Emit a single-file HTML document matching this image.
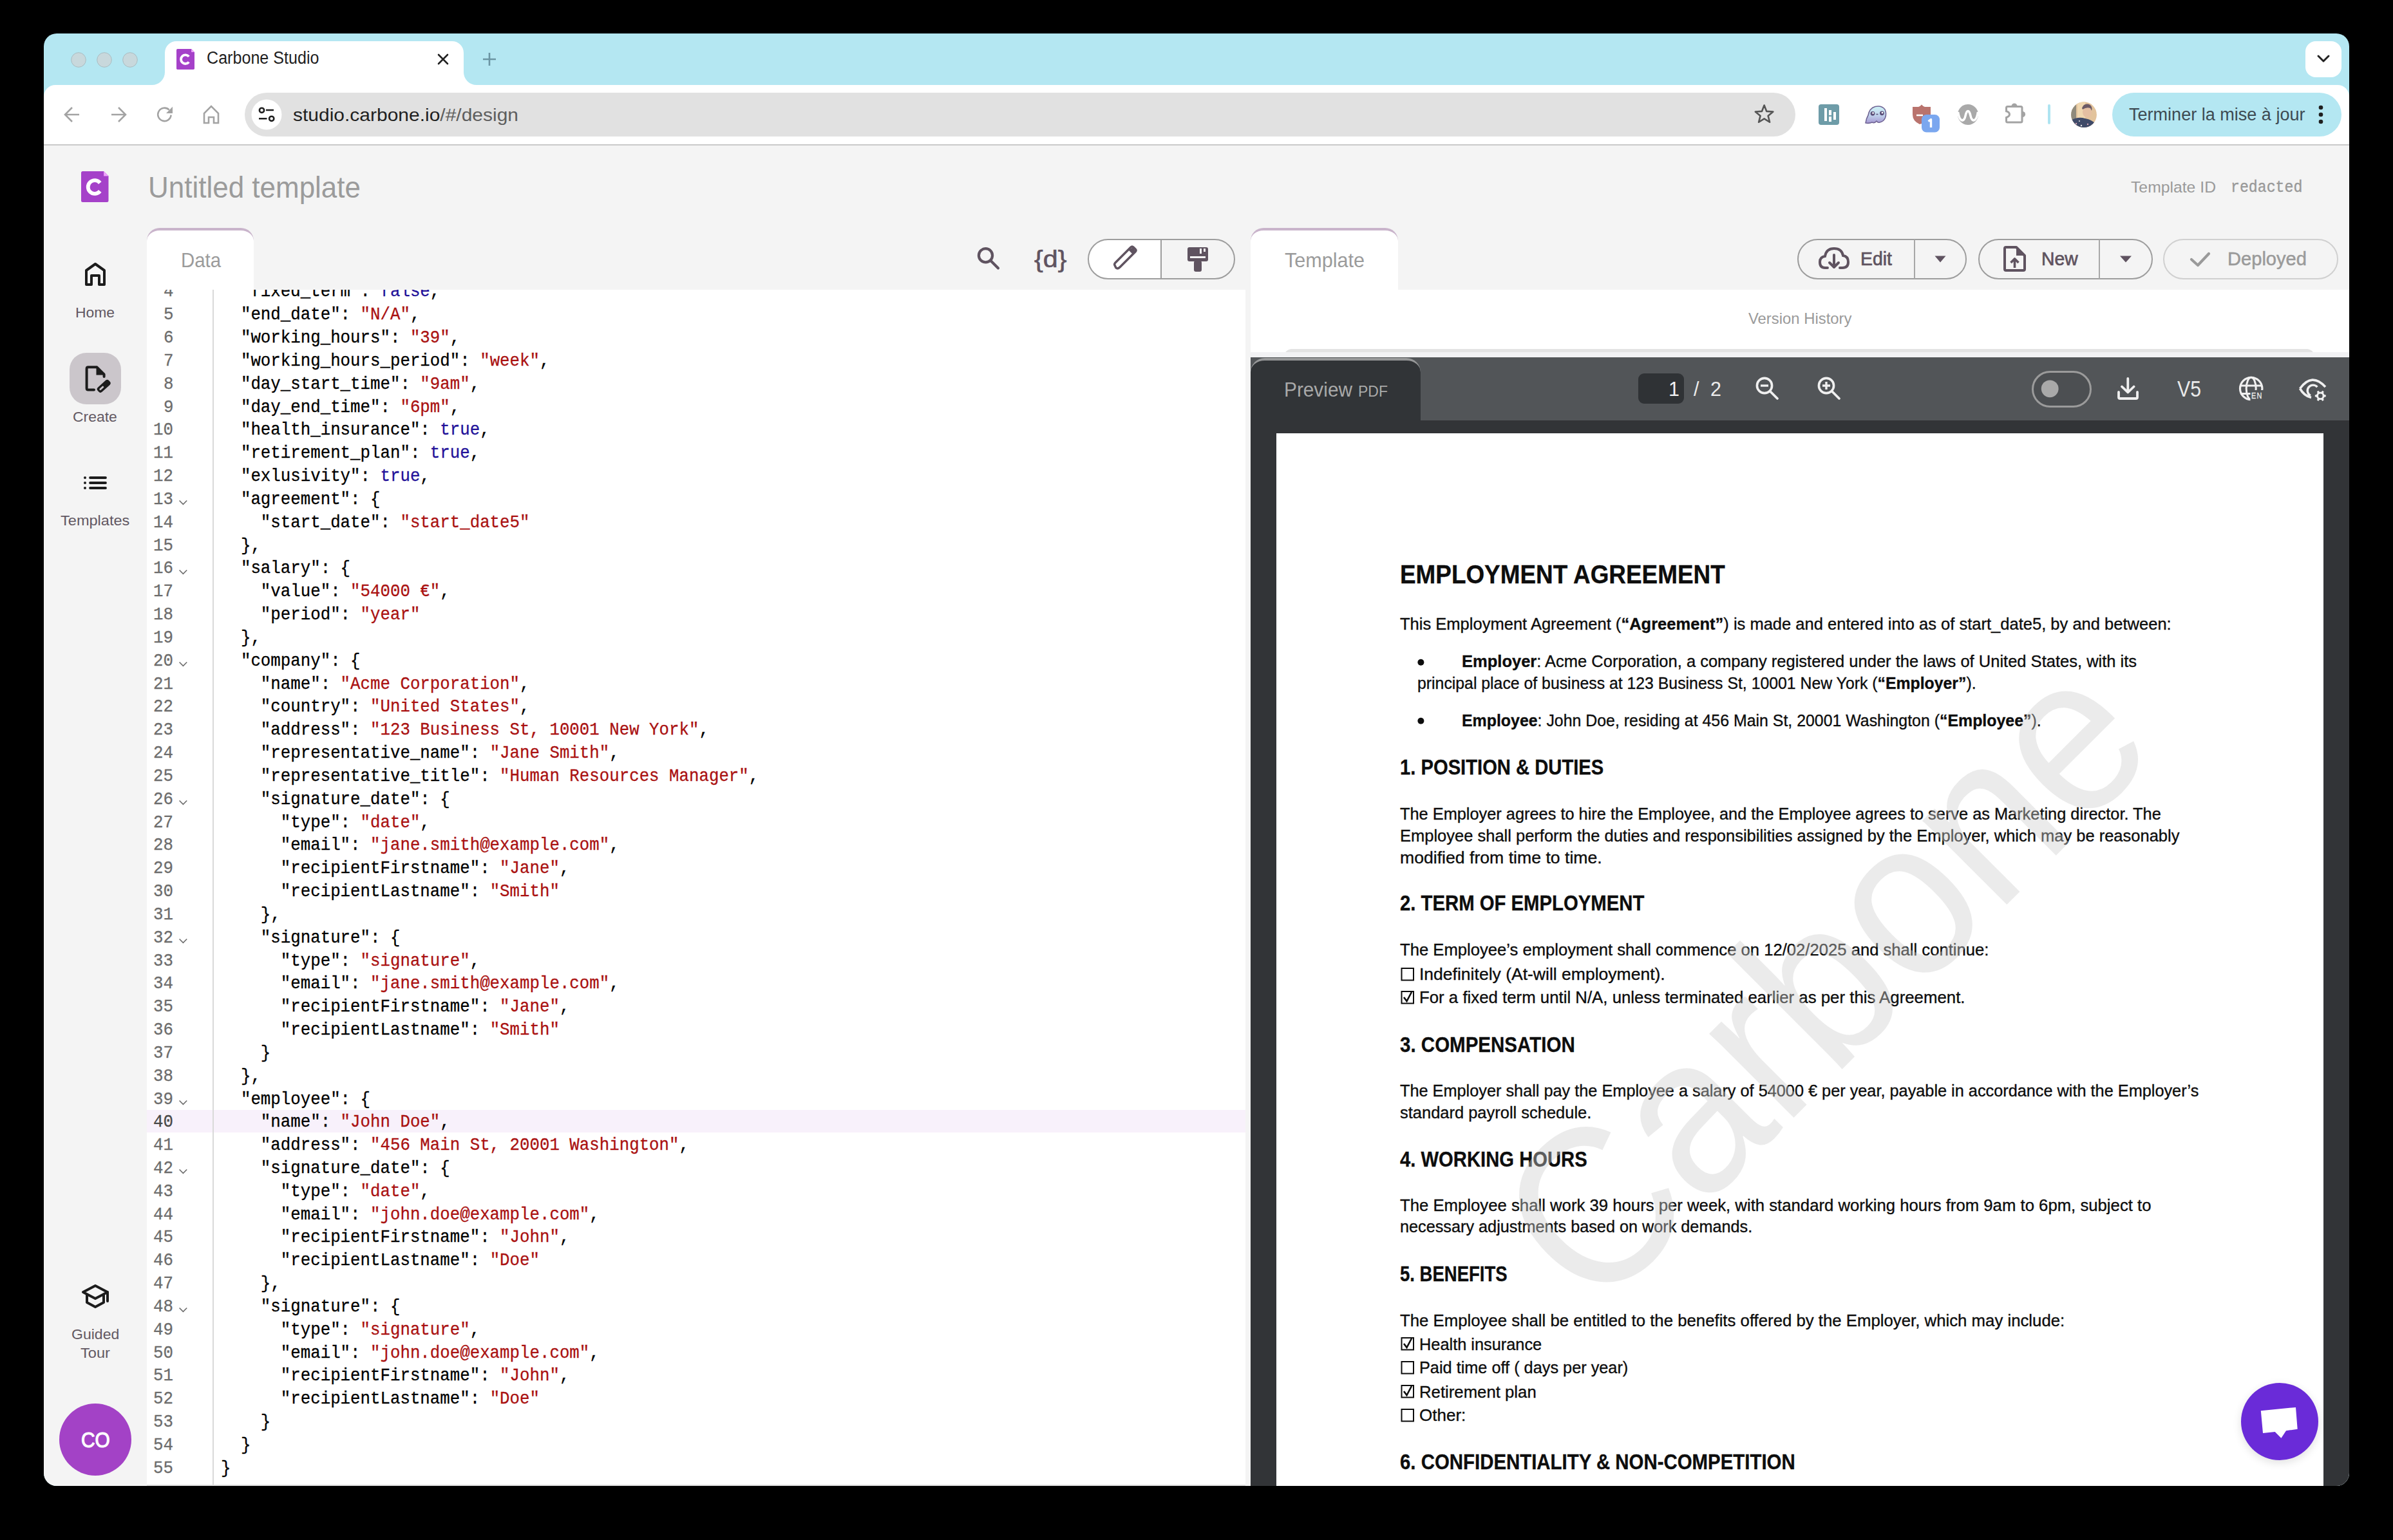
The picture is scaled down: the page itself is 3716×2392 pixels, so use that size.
<!DOCTYPE html>
<html><head><meta charset="utf-8"><title>Carbone Studio</title>
<style>
html,body{margin:0;padding:0;width:3716px;height:2392px;overflow:hidden;background:#000;}
#win{position:absolute;left:68px;top:52px;width:3580px;height:2256px;border-radius:20px;overflow:hidden;background:#b4e7f2;}
.t{position:absolute;white-space:pre;}
b{font-weight:700;}
</style></head><body>
<div id="win">
<svg style="position:absolute;left:41.00px;top:28.00px;" width="26" height="26" viewBox="109 80 26 26"><circle cx="122" cy="93" r="11.3" fill="#c8d8dc" stroke="#a9bcc1" stroke-width="1"/></svg>
<svg style="position:absolute;left:81.00px;top:28.00px;" width="26" height="26" viewBox="149 80 26 26"><circle cx="162" cy="93" r="11.3" fill="#c8d8dc" stroke="#a9bcc1" stroke-width="1"/></svg>
<svg style="position:absolute;left:121.00px;top:28.00px;" width="26" height="26" viewBox="189 80 26 26"><circle cx="202" cy="93" r="11.3" fill="#c8d8dc" stroke="#a9bcc1" stroke-width="1"/></svg>
<svg style="position:absolute;left:158.00px;top:8.00px;" width="524" height="74" viewBox="226 60 524 74"><path d="M226 132 L236 132 A20 20 0 0 0 256 112 L256 82 A18 18 0 0 1 274 64 L702 64 A18 18 0 0 1 720 82 L720 112 A20 20 0 0 0 740 132 L750 132 L750 134 L226 134 Z" fill="#fff"/></svg>
<svg style="position:absolute;left:206.00px;top:24.00px;" width="28" height="32" viewBox="274 76 28 32"><path d="M275.6470588235294 76 L297.12470588235294 76 L302 80.87529411764706 L302 106.3529411764706 Q302 108 300.3529411764706 108 L275.6470588235294 108 Q274 108 274 106.3529411764706 L274 77.6470588235294 Q274 76 275.6470588235294 76 Z" fill="#a541c9"/><path d="M297.12470588235294 76 L302 80.87529411764706 L297.12470588235294 80.87529411764706 Z" fill="#eea2fb"/><path d="M293.30 87.92 A6.85 6.85 0 1 0 293.30 96.36" stroke="#fff" stroke-width="3.82" fill="none"/></svg>
<span id="t1" class="t" style="left:253.00px;top:25.35px;font-size:27px;line-height:27px;font-family:'Liberation Sans',sans-serif;color:#1f1f1f;font-weight:400;transform:scaleX(0.9300);transform-origin:left top;">Carbone Studio</span>
<svg style="position:absolute;left:610.00px;top:30.00px;" width="20" height="20" viewBox="678 82 20 20"><path d="M681 85 L695 99 M695 85 L681 99" stroke="#222" stroke-width="2.6" stroke-linecap="round"/></svg>
<svg style="position:absolute;left:680.00px;top:28.00px;" width="24" height="24" viewBox="748 80 24 24"><path d="M760 82 L760 102 M750 92 L770 92" stroke="#6b95a3" stroke-width="2.6"/></svg>
<div  style="position:absolute;left:3512.00px;top:12.00px;width:56.00px;height:56.00px;background:#fff;border-radius:16px;"></div>
<svg style="position:absolute;left:3528.00px;top:32.00px;" width="24" height="16" viewBox="3596 84 24 16"><path d="M3600 87 L3608 95 L3616 87" stroke="#222" stroke-width="3" fill="none" stroke-linecap="round" stroke-linejoin="round"/></svg>
<svg style="position:absolute;left:0.00px;top:80.00px;" width="3580" height="94" viewBox="68 132 3580 94"><path d="M68 226 L68 150 A18 18 0 0 1 86 132 L3630 132 A18 18 0 0 1 3648 150 L3648 226 Z" fill="#fff"/></svg>
<div  style="position:absolute;left:0.00px;top:172.00px;width:3580.00px;height:2.00px;background:#c9c9c9;"></div>
<svg style="position:absolute;left:28.00px;top:110.00px;" width="32" height="32" viewBox="96 162 32 32"><path d="M123 178 L101 178 M112 167 L101 178 L112 189" stroke="#a3a3a3" stroke-width="2.6" fill="none"/></svg>
<svg style="position:absolute;left:100.00px;top:110.00px;" width="32" height="32" viewBox="168 162 32 32"><path d="M173 178 L195 178 M184 167 L195 178 L184 189" stroke="#a3a3a3" stroke-width="2.6" fill="none"/></svg>
<svg style="position:absolute;left:172.00px;top:110.00px;" width="32" height="32" viewBox="240 162 32 32"><path d="M265.6 178.7 A10.2 10.2 0 1 1 262.6 170.6" stroke="#a3a3a3" stroke-width="2.6" fill="none"/><path d="M268 165.8 L268 176 L258 176 Z" fill="#a3a3a3"/></svg>
<svg style="position:absolute;left:244.00px;top:108.00px;" width="32" height="36" viewBox="312 160 32 36"><path d="M317 191 L317 176 L328 165 L339 176 L339 191 L332 191 L332 182 L324 182 L324 191 Z" stroke="#a3a3a3" stroke-width="2.6" fill="none" stroke-linejoin="miter"/></svg>
<div  style="position:absolute;left:312.00px;top:92.00px;width:2408.00px;height:68.00px;background:#e1e1e1;border-radius:34px;"></div>
<svg style="position:absolute;left:322.00px;top:102.00px;" width="48" height="48" viewBox="390 154 48 48"><circle cx="414" cy="178" r="23.5" fill="#fff"/><circle cx="406.5" cy="171.3" r="3.6" stroke="#1f1f1f" stroke-width="2.6" fill="none"/><path d="M413 171 L425 171 M402 184.3 L414.5 184.3" stroke="#1f1f1f" stroke-width="2.6"/><circle cx="421.7" cy="184.3" r="3.6" stroke="#1f1f1f" stroke-width="2.6" fill="none"/></svg>
<span id="t2" class="t" style="left:387.00px;top:111.78px;font-size:28.5px;line-height:28.5px;font-family:'Liberation Sans',sans-serif;color:#000;font-weight:400;transform:scaleX(1.0519);transform-origin:left top;"><span style="color:#1f1f1f">studio.carbone.io</span><span style="color:#5e5e5e">/#/design</span></span>
<svg style="position:absolute;left:2652.00px;top:106.00px;" width="40" height="40" viewBox="2720 158 40 40"><path d="M2739.60 163.50 L2743.30 172.90 L2753.39 173.52 L2745.59 179.95 L2748.12 189.73 L2739.60 184.30 L2731.08 189.73 L2733.61 179.95 L2725.81 173.52 L2735.90 172.90 Z" stroke="#555" stroke-width="2.6" fill="none" stroke-linejoin="round"/></svg>
<svg style="position:absolute;left:2756.00px;top:110.00px;" width="32" height="32" viewBox="2824 162 32 32"><rect x="2824" y="162" width="32" height="32" rx="4" fill="#6e9ca8"/><rect x="2833" y="168" width="4" height="20" fill="#fff"/><rect x="2840" y="171" width="4" height="8" fill="#fff"/><rect x="2840" y="181" width="4" height="8" fill="#fff"/><rect x="2847" y="174" width="4" height="12" fill="#fff"/></svg>
<svg style="position:absolute;left:2824.00px;top:108.00px;" width="40" height="36" viewBox="2892 160 40 36"><defs><linearGradient id="gh" x1="0" y1="0" x2="0" y2="1"><stop offset="0" stop-color="#cdf3f6"/><stop offset="0.5" stop-color="#c2d6ee"/><stop offset="1" stop-color="#a597d2"/></linearGradient></defs><path d="M2897 191 Q2898 184 2901 179 Q2903 168 2912 165.5 Q2922 163.5 2927 170 Q2930 176 2927.5 183 Q2925 189 2919 190 Q2916 191 2914 188 Q2911 192 2907 190 Q2903 192 2897 191 Z" fill="url(#gh)" stroke="#6f6494" stroke-width="1.6" stroke-linejoin="round"/><circle cx="2908" cy="176.3" r="3.4" fill="#5a4e78"/><circle cx="2908.6" cy="175.6" r="1.4" fill="#fff"/><circle cx="2922.4" cy="175.8" r="3.4" fill="#5a4e78"/><circle cx="2923" cy="175.1" r="1.4" fill="#fff"/><path d="M2913.5 177.5 L2916.5 177.5" stroke="#5a4e78" stroke-width="1.6"/></svg>
<svg style="position:absolute;left:2898.00px;top:106.00px;" width="50" height="50" viewBox="2966 158 50 50"><path d="M2970 166 L2979 166 Q2982 165 2984 162.5 Q2986 165 2989 166 L2998 166 L2998 178 Q2997 188 2981 193 Q2970 188 2970 178 Z" fill="#b9736d"/><path d="M2976 179 L2986 179" stroke="#fff" stroke-width="2.6"/><rect x="2984" y="178" width="28" height="27.5" rx="7.5" fill="#7ba7ef"/><path d="M2994.5 188.5 L2998.5 185.5 L2998.5 198" stroke="#fff" stroke-width="3.4" fill="none" stroke-linejoin="round"/></svg>
<svg style="position:absolute;left:2970.00px;top:108.00px;" width="36" height="36" viewBox="3038 160 36 36"><circle cx="3056" cy="178" r="16" fill="#a9a9a9"/><path d="M3040.5 174 C3043 190 3050 190 3052 180 C3054 170 3058 170 3060 180 C3062 190 3069 190 3071.5 174" stroke="#fff" stroke-width="3.6" fill="none"/></svg>
<svg style="position:absolute;left:3040.00px;top:102.00px;" width="44" height="44" viewBox="3108 154 44 44"><path d="M3117.5 165.5 L3138 165.5 Q3140 165.5 3140 167.5 L3140 188 Q3140 190 3138 190 L3117.5 190 Q3115.5 190 3115.5 188 L3115.5 182.5 Q3120.5 181 3120.5 177.6 Q3120.5 174.2 3115.5 172.8 L3115.5 167.5 Q3115.5 165.5 3117.5 165.5 Z" stroke="#a3a3a3" stroke-width="3" fill="none"/><path d="M3123.5 165 A4.5 4.5 0 0 1 3132.5 165 Z" fill="#a3a3a3"/><path d="M3140.5 173 A4.6 4.6 0 0 1 3140.5 182.2 Z" fill="#a3a3a3"/></svg>
<div  style="position:absolute;left:3112.00px;top:110.00px;width:4.00px;height:31.00px;background:#aee4f1;border-radius:2px;"></div>
<svg style="position:absolute;left:3146.00px;top:104.00px;" width="44" height="44" viewBox="3214 156 44 44"><defs><clipPath id="av"><circle cx="3236" cy="178.2" r="19.9"/></clipPath></defs><g clip-path="url(#av)"><rect x="3214" y="156" width="44" height="44" fill="#e2c39c"/><rect x="3216" y="156" width="8" height="30" fill="#8f8a7c"/><rect x="3226" y="156" width="12" height="28" fill="#efd7b0"/><ellipse cx="3241" cy="174" rx="7" ry="8.5" fill="#e4bfa2"/><path d="M3233 168 Q3236 160 3244 162 Q3250 165 3248 172 L3246 168 Q3240 166 3234 170 Z" fill="#6b5a66"/><path d="M3214 188 Q3226 180 3238 184 Q3250 186 3258 196 L3258 200 L3214 200 Z" fill="#3f4a68"/><circle cx="3224" cy="192" r="1.2" fill="#d9a6b8"/><circle cx="3232" cy="195" r="1.2" fill="#e6e6e6"/><circle cx="3242" cy="193" r="1.2" fill="#d9a6b8"/><circle cx="3229" cy="188" r="1" fill="#e6e6e6"/></g></svg>
<div  style="position:absolute;left:3212.00px;top:92.00px;width:356.00px;height:68.00px;background:#b4e7f2;border-radius:34px;"></div>
<span id="t3" class="t" style="left:3237.50px;top:113.05px;font-size:27px;line-height:27px;font-family:'Liberation Sans',sans-serif;color:#3e4b53;font-weight:400;transform:scaleX(1.0015);transform-origin:left top;">Terminer la mise à jour</span>
<svg style="position:absolute;left:3531.00px;top:109.60px;" width="10" height="10" viewBox="3599 161.6 10 10"><circle cx="3604" cy="166.6" r="3.3" fill="#1f1f1f"/></svg>
<svg style="position:absolute;left:3531.00px;top:121.00px;" width="10" height="10" viewBox="3599 173 10 10"><circle cx="3604" cy="178" r="3.3" fill="#1f1f1f"/></svg>
<svg style="position:absolute;left:3531.00px;top:132.30px;" width="10" height="10" viewBox="3599 184.3 10 10"><circle cx="3604" cy="189.3" r="3.3" fill="#1f1f1f"/></svg>
<div  style="position:absolute;left:0.00px;top:174.00px;width:3580.00px;height:2082.00px;background:#f4f4f4;"></div>
<svg style="position:absolute;left:58.40px;top:213.80px;" width="42.5" height="48" viewBox="126.4 265.8 42.5 48"><path d="M128.9 265.8 L161.5 265.8 L168.9 273.2 L168.9 311.3 Q168.9 313.8 166.4 313.8 L128.9 313.8 Q126.4 313.8 126.4 311.3 L126.4 268.3 Q126.4 265.8 128.9 265.8 Z" fill="#a541c9"/><path d="M161.5 265.8 L168.9 273.2 L161.5 273.2 Z" fill="#eea2fb"/><path d="M155.70 283.90 A10.40 10.40 0 1 0 155.70 296.70" stroke="#fff" stroke-width="5.80" fill="none"/></svg>
<span id="t4" class="t" style="left:162.00px;top:216.52px;font-size:45.5px;line-height:45.5px;font-family:'Liberation Sans',sans-serif;color:#9b9b9b;font-weight:400;transform:scaleX(0.9665);transform-origin:left top;">Untitled template</span>
<span id="t5" class="t" style="left:3241.00px;top:226.64px;font-size:24.3px;line-height:24.3px;font-family:'Liberation Sans',sans-serif;color:#9a9a9a;font-weight:400;transform:scaleX(1.0182);transform-origin:left top;">Template ID</span>
<span id="t6" class="t" style="left:3395.50px;top:227.20px;font-size:25px;line-height:25px;font-family:'Liberation Mono',monospace;color:#999;font-weight:400;transform:scaleX(0.9281);transform-origin:left top;-webkit-text-stroke:0.4px #999;">redacted</span>
<svg style="position:absolute;left:60.00px;top:353.00px;" width="40" height="42" viewBox="128 405 40 42"><path d="M134 442 L134 420 L148 410 L162 420 L162 442 L154 442 L154 428 L142 428 L142 442 Z" stroke="#1c1c1c" stroke-width="4" fill="none" stroke-linejoin="round"/></svg>
<span id="t7" class="t" style="left:49.30px;top:422.70px;font-size:22px;line-height:22px;font-family:'Liberation Sans',sans-serif;color:#625862;font-weight:400;transform:scaleX(1.0411);transform-origin:left top;">Home</span>
<div  style="position:absolute;left:40.00px;top:496.00px;width:80.00px;height:80.00px;background:#cbc6cb;border-radius:26px;"></div>
<svg style="position:absolute;left:60.00px;top:510.00px;" width="48" height="52" viewBox="128 562 48 52"><path d="M146 605.5 L137 605.5 Q134.6 605.5 134.6 603 L134.6 572.7 Q134.6 570.3 137 570.3 L150.5 570.3 L161.6 581.5 L161.6 585" stroke="#1c1c1c" stroke-width="4" fill="none" stroke-linejoin="round" stroke-linecap="round"/><path d="M149.5 568.8 L163.2 582.6 L149.5 582.6 Z" fill="#1c1c1c"/><g transform="rotate(-42 161.2 599.8)"><rect x="149.5" y="595" width="23.4" height="9.6" rx="3.6" fill="#1c1c1c"/><rect x="152.6" y="598.3" width="8" height="3" rx="1.2" fill="#cbc6cb"/></g></svg>
<span id="t8" class="t" style="left:45.40px;top:584.50px;font-size:22px;line-height:22px;font-family:'Liberation Sans',sans-serif;color:#625862;font-weight:400;transform:scaleX(1.0432);transform-origin:left top;">Create</span>
<svg style="position:absolute;left:58.00px;top:683.00px;" width="44" height="30" viewBox="126 735 44 30"><circle cx="132" cy="742" r="2" fill="#1c1c1c"/><circle cx="132" cy="750" r="2" fill="#1c1c1c"/><circle cx="132" cy="758" r="2" fill="#1c1c1c"/><path d="M140 742 L164 742 M140 750 L164 750 M140 758 L164 758" stroke="#1c1c1c" stroke-width="3.8" stroke-linecap="round"/></svg>
<span id="t9" class="t" style="left:26.30px;top:745.70px;font-size:22px;line-height:22px;font-family:'Liberation Sans',sans-serif;color:#625862;font-weight:400;transform:scaleX(1.0710);transform-origin:left top;">Templates</span>
<svg style="position:absolute;left:56.00px;top:1938.00px;" width="50" height="46" viewBox="124 1990 50 46"><path d="M129 2007 L148 1997 L167 2007 L148 2017 Z" stroke="#1c1c1c" stroke-width="4" fill="none" stroke-linejoin="round"/><path d="M135 2011 L135 2023 L148 2030 L161 2023 L161 2011" stroke="#1c1c1c" stroke-width="4" fill="none" stroke-linejoin="round"/><path d="M167 2007 L167 2021" stroke="#1c1c1c" stroke-width="4" stroke-linecap="round"/></svg>
<span id="t10" class="t" style="left:42.70px;top:2010.30px;font-size:22px;line-height:22px;font-family:'Liberation Sans',sans-serif;color:#625862;font-weight:400;transform:scaleX(1.0472);transform-origin:left top;">Guided</span>
<span id="t11" class="t" style="left:56.80px;top:2038.60px;font-size:22px;line-height:22px;font-family:'Liberation Sans',sans-serif;color:#625862;font-weight:400;transform:scaleX(1.0725);transform-origin:left top;">Tour</span>
<div  style="position:absolute;left:24.00px;top:2128.00px;width:112.00px;height:112.00px;background:#a342c6;border-radius:50%;"></div>
<span id="t12" class="t" style="left:58.00px;top:2167.10px;font-size:34px;line-height:34px;font-family:'Liberation Sans',sans-serif;color:#fff;font-weight:400;transform:scaleX(0.8765);transform-origin:left top;-webkit-text-stroke:1.2px #fff;">CO</span>
<div  style="position:absolute;left:160.00px;top:302.00px;width:166.00px;height:96.00px;background:#fff;border-radius:20px 20px 0 0;border-top:4px solid #c9b4cb;box-sizing:border-box;"></div>
<span id="t13" class="t" style="left:212.60px;top:335.70px;font-size:32px;line-height:32px;font-family:'Liberation Sans',sans-serif;color:#9b9b9b;font-weight:400;transform:scaleX(0.9187);transform-origin:left top;">Data</span>
<svg style="position:absolute;left:1444.00px;top:328.00px;" width="46" height="44" viewBox="1512 380 46 44"><circle cx="1530.5" cy="396.8" r="10.6" stroke="#5f5360" stroke-width="4.2" fill="none"/><path d="M1538.5 405 L1550 416.5" stroke="#5f5360" stroke-width="4.2" stroke-linecap="round"/></svg>
<span id="t14" class="t" style="left:1538.00px;top:333.40px;font-size:36px;line-height:36px;font-family:'Liberation Sans',sans-serif;color:#5f5360;font-weight:400;transform:scaleX(1.1457);transform-origin:left top;-webkit-text-stroke:0.6px #5f5360;">{d}</span>
<div  style="position:absolute;left:1621.00px;top:318.50px;width:229.00px;height:63.00px;border:2px solid #9d9d9d;border-radius:32px;box-sizing:border-box;background:linear-gradient(90deg,#fff 0 50%, #f4f4f4 50%);"></div>
<div  style="position:absolute;left:1734.00px;top:319.00px;width:2.00px;height:62.00px;background:#9d9d9d;"></div>
<svg style="position:absolute;left:1654.00px;top:328.00px;" width="46" height="44" viewBox="1722 380 46 44"><path d="M1733 416 L1731 412 Q1730 410 1732 408 L1756 384 Q1758 382 1760 384 L1763 387 Q1765 389 1763 391 L1739 415 Q1737 417 1735 417 Z" stroke="#5f5360" stroke-width="3.5" fill="none" stroke-linejoin="round"/><path d="M1752 388 L1759 395 L1763 391 L1760 384 Z" fill="#5f5360"/></svg>
<svg style="position:absolute;left:1772.00px;top:328.00px;" width="40" height="46" viewBox="1840 380 40 46"><rect x="1844" y="384" width="32" height="22" rx="3" fill="#5f5360"/><rect x="1848" y="398" width="24" height="3" fill="#f4f4f4"/><rect x="1863" y="386" width="3" height="8" fill="#f4f4f4"/><rect x="1869" y="386" width="3" height="5" fill="#f4f4f4"/><rect x="1854" y="405" width="12" height="17" rx="3" fill="#5f5360"/></svg>
<div  style="position:absolute;left:160.00px;top:398.00px;width:1706.00px;height:1858.00px;background:#fff;"></div>
<div  style="position:absolute;left:160.00px;top:1672.20px;width:1706.00px;height:35.20px;background:#f8f1fb;"></div>
<div  style="position:absolute;left:262.30px;top:398.00px;width:2.00px;height:1856.00px;background:#d9d9d9;"></div>
<div  style="position:absolute;left:160.00px;top:2253.50px;width:1706.00px;height:2.50px;background:#dedede;"></div>
<div  style="position:absolute;left:160.00px;top:398.00px;width:1706.00px;height:1856.00px;overflow:hidden;font-family:'Liberation Mono',monospace;"><div style="position:absolute;left:115.19999999999999px;top:-10.55px;font-size:27.4px;line-height:27.4px;white-space:pre;transform:scaleX(0.9410);transform-origin:0 0;-webkit-text-stroke:0.3px currentColor">  <span style="color:#000">&quot;fixed_term&quot;</span><span style="color:#000">: </span><span style="color:#219">false</span><span style="color:#000">,</span></div><div style="position:absolute;right:1665px;top:-10.55px;font-size:27.4px;line-height:27.4px;color:#6d6d6d;white-space:pre;transform:scaleX(0.9410);transform-origin:100% 0;-webkit-text-stroke:0.3px #6d6d6d">4</div><div style="position:absolute;left:115.19999999999999px;top:25.28px;font-size:27.4px;line-height:27.4px;white-space:pre;transform:scaleX(0.9410);transform-origin:0 0;-webkit-text-stroke:0.3px currentColor">  <span style="color:#000">&quot;end_date&quot;</span><span style="color:#000">: </span><span style="color:#a11">&quot;N/A&quot;</span><span style="color:#000">,</span></div><div style="position:absolute;right:1665px;top:25.28px;font-size:27.4px;line-height:27.4px;color:#6d6d6d;white-space:pre;transform:scaleX(0.9410);transform-origin:100% 0;-webkit-text-stroke:0.3px #6d6d6d">5</div><div style="position:absolute;left:115.19999999999999px;top:61.11px;font-size:27.4px;line-height:27.4px;white-space:pre;transform:scaleX(0.9410);transform-origin:0 0;-webkit-text-stroke:0.3px currentColor">  <span style="color:#000">&quot;working_hours&quot;</span><span style="color:#000">: </span><span style="color:#a11">&quot;39&quot;</span><span style="color:#000">,</span></div><div style="position:absolute;right:1665px;top:61.11px;font-size:27.4px;line-height:27.4px;color:#6d6d6d;white-space:pre;transform:scaleX(0.9410);transform-origin:100% 0;-webkit-text-stroke:0.3px #6d6d6d">6</div><div style="position:absolute;left:115.19999999999999px;top:96.94px;font-size:27.4px;line-height:27.4px;white-space:pre;transform:scaleX(0.9410);transform-origin:0 0;-webkit-text-stroke:0.3px currentColor">  <span style="color:#000">&quot;working_hours_period&quot;</span><span style="color:#000">: </span><span style="color:#a11">&quot;week&quot;</span><span style="color:#000">,</span></div><div style="position:absolute;right:1665px;top:96.94px;font-size:27.4px;line-height:27.4px;color:#6d6d6d;white-space:pre;transform:scaleX(0.9410);transform-origin:100% 0;-webkit-text-stroke:0.3px #6d6d6d">7</div><div style="position:absolute;left:115.19999999999999px;top:132.77px;font-size:27.4px;line-height:27.4px;white-space:pre;transform:scaleX(0.9410);transform-origin:0 0;-webkit-text-stroke:0.3px currentColor">  <span style="color:#000">&quot;day_start_time&quot;</span><span style="color:#000">: </span><span style="color:#a11">&quot;9am&quot;</span><span style="color:#000">,</span></div><div style="position:absolute;right:1665px;top:132.77px;font-size:27.4px;line-height:27.4px;color:#6d6d6d;white-space:pre;transform:scaleX(0.9410);transform-origin:100% 0;-webkit-text-stroke:0.3px #6d6d6d">8</div><div style="position:absolute;left:115.19999999999999px;top:168.60px;font-size:27.4px;line-height:27.4px;white-space:pre;transform:scaleX(0.9410);transform-origin:0 0;-webkit-text-stroke:0.3px currentColor">  <span style="color:#000">&quot;day_end_time&quot;</span><span style="color:#000">: </span><span style="color:#a11">&quot;6pm&quot;</span><span style="color:#000">,</span></div><div style="position:absolute;right:1665px;top:168.60px;font-size:27.4px;line-height:27.4px;color:#6d6d6d;white-space:pre;transform:scaleX(0.9410);transform-origin:100% 0;-webkit-text-stroke:0.3px #6d6d6d">9</div><div style="position:absolute;left:115.19999999999999px;top:204.43px;font-size:27.4px;line-height:27.4px;white-space:pre;transform:scaleX(0.9410);transform-origin:0 0;-webkit-text-stroke:0.3px currentColor">  <span style="color:#000">&quot;health_insurance&quot;</span><span style="color:#000">: </span><span style="color:#219">true</span><span style="color:#000">,</span></div><div style="position:absolute;right:1665px;top:204.43px;font-size:27.4px;line-height:27.4px;color:#6d6d6d;white-space:pre;transform:scaleX(0.9410);transform-origin:100% 0;-webkit-text-stroke:0.3px #6d6d6d">10</div><div style="position:absolute;left:115.19999999999999px;top:240.26px;font-size:27.4px;line-height:27.4px;white-space:pre;transform:scaleX(0.9410);transform-origin:0 0;-webkit-text-stroke:0.3px currentColor">  <span style="color:#000">&quot;retirement_plan&quot;</span><span style="color:#000">: </span><span style="color:#219">true</span><span style="color:#000">,</span></div><div style="position:absolute;right:1665px;top:240.26px;font-size:27.4px;line-height:27.4px;color:#6d6d6d;white-space:pre;transform:scaleX(0.9410);transform-origin:100% 0;-webkit-text-stroke:0.3px #6d6d6d">11</div><div style="position:absolute;left:115.19999999999999px;top:276.09px;font-size:27.4px;line-height:27.4px;white-space:pre;transform:scaleX(0.9410);transform-origin:0 0;-webkit-text-stroke:0.3px currentColor">  <span style="color:#000">&quot;exlusivity&quot;</span><span style="color:#000">: </span><span style="color:#219">true</span><span style="color:#000">,</span></div><div style="position:absolute;right:1665px;top:276.09px;font-size:27.4px;line-height:27.4px;color:#6d6d6d;white-space:pre;transform:scaleX(0.9410);transform-origin:100% 0;-webkit-text-stroke:0.3px #6d6d6d">12</div><div style="position:absolute;left:115.19999999999999px;top:311.92px;font-size:27.4px;line-height:27.4px;white-space:pre;transform:scaleX(0.9410);transform-origin:0 0;-webkit-text-stroke:0.3px currentColor">  <span style="color:#000">&quot;agreement&quot;</span><span style="color:#000">: </span><span style="color:#000">{</span></div><div style="position:absolute;right:1665px;top:311.92px;font-size:27.4px;line-height:27.4px;color:#6d6d6d;white-space:pre;transform:scaleX(0.9410);transform-origin:100% 0;-webkit-text-stroke:0.3px #6d6d6d">13</div><svg style="position:absolute;left:48px;top:323.24px" width="16" height="16" viewBox="0 0 16 16"><path d="M2.6 4.5 L8.4 10.3 L14.2 4.5" stroke="#6d6d6d" stroke-width="1.6" fill="none"/></svg><div style="position:absolute;left:115.19999999999999px;top:347.75px;font-size:27.4px;line-height:27.4px;white-space:pre;transform:scaleX(0.9410);transform-origin:0 0;-webkit-text-stroke:0.3px currentColor">    <span style="color:#000">&quot;start_date&quot;</span><span style="color:#000">: </span><span style="color:#a11">&quot;start_date5&quot;</span><span style="color:#000"></span></div><div style="position:absolute;right:1665px;top:347.75px;font-size:27.4px;line-height:27.4px;color:#6d6d6d;white-space:pre;transform:scaleX(0.9410);transform-origin:100% 0;-webkit-text-stroke:0.3px #6d6d6d">14</div><div style="position:absolute;left:115.19999999999999px;top:383.58px;font-size:27.4px;line-height:27.4px;white-space:pre;transform:scaleX(0.9410);transform-origin:0 0;-webkit-text-stroke:0.3px currentColor">  <span style="color:#000">},</span></div><div style="position:absolute;right:1665px;top:383.58px;font-size:27.4px;line-height:27.4px;color:#6d6d6d;white-space:pre;transform:scaleX(0.9410);transform-origin:100% 0;-webkit-text-stroke:0.3px #6d6d6d">15</div><div style="position:absolute;left:115.19999999999999px;top:419.41px;font-size:27.4px;line-height:27.4px;white-space:pre;transform:scaleX(0.9410);transform-origin:0 0;-webkit-text-stroke:0.3px currentColor">  <span style="color:#000">&quot;salary&quot;</span><span style="color:#000">: </span><span style="color:#000">{</span></div><div style="position:absolute;right:1665px;top:419.41px;font-size:27.4px;line-height:27.4px;color:#6d6d6d;white-space:pre;transform:scaleX(0.9410);transform-origin:100% 0;-webkit-text-stroke:0.3px #6d6d6d">16</div><svg style="position:absolute;left:48px;top:430.73px" width="16" height="16" viewBox="0 0 16 16"><path d="M2.6 4.5 L8.4 10.3 L14.2 4.5" stroke="#6d6d6d" stroke-width="1.6" fill="none"/></svg><div style="position:absolute;left:115.19999999999999px;top:455.24px;font-size:27.4px;line-height:27.4px;white-space:pre;transform:scaleX(0.9410);transform-origin:0 0;-webkit-text-stroke:0.3px currentColor">    <span style="color:#000">&quot;value&quot;</span><span style="color:#000">: </span><span style="color:#a11">&quot;54000 €&quot;</span><span style="color:#000">,</span></div><div style="position:absolute;right:1665px;top:455.24px;font-size:27.4px;line-height:27.4px;color:#6d6d6d;white-space:pre;transform:scaleX(0.9410);transform-origin:100% 0;-webkit-text-stroke:0.3px #6d6d6d">17</div><div style="position:absolute;left:115.19999999999999px;top:491.07px;font-size:27.4px;line-height:27.4px;white-space:pre;transform:scaleX(0.9410);transform-origin:0 0;-webkit-text-stroke:0.3px currentColor">    <span style="color:#000">&quot;period&quot;</span><span style="color:#000">: </span><span style="color:#a11">&quot;year&quot;</span><span style="color:#000"></span></div><div style="position:absolute;right:1665px;top:491.07px;font-size:27.4px;line-height:27.4px;color:#6d6d6d;white-space:pre;transform:scaleX(0.9410);transform-origin:100% 0;-webkit-text-stroke:0.3px #6d6d6d">18</div><div style="position:absolute;left:115.19999999999999px;top:526.90px;font-size:27.4px;line-height:27.4px;white-space:pre;transform:scaleX(0.9410);transform-origin:0 0;-webkit-text-stroke:0.3px currentColor">  <span style="color:#000">},</span></div><div style="position:absolute;right:1665px;top:526.90px;font-size:27.4px;line-height:27.4px;color:#6d6d6d;white-space:pre;transform:scaleX(0.9410);transform-origin:100% 0;-webkit-text-stroke:0.3px #6d6d6d">19</div><div style="position:absolute;left:115.19999999999999px;top:562.73px;font-size:27.4px;line-height:27.4px;white-space:pre;transform:scaleX(0.9410);transform-origin:0 0;-webkit-text-stroke:0.3px currentColor">  <span style="color:#000">&quot;company&quot;</span><span style="color:#000">: </span><span style="color:#000">{</span></div><div style="position:absolute;right:1665px;top:562.73px;font-size:27.4px;line-height:27.4px;color:#6d6d6d;white-space:pre;transform:scaleX(0.9410);transform-origin:100% 0;-webkit-text-stroke:0.3px #6d6d6d">20</div><svg style="position:absolute;left:48px;top:574.05px" width="16" height="16" viewBox="0 0 16 16"><path d="M2.6 4.5 L8.4 10.3 L14.2 4.5" stroke="#6d6d6d" stroke-width="1.6" fill="none"/></svg><div style="position:absolute;left:115.19999999999999px;top:598.56px;font-size:27.4px;line-height:27.4px;white-space:pre;transform:scaleX(0.9410);transform-origin:0 0;-webkit-text-stroke:0.3px currentColor">    <span style="color:#000">&quot;name&quot;</span><span style="color:#000">: </span><span style="color:#a11">&quot;Acme Corporation&quot;</span><span style="color:#000">,</span></div><div style="position:absolute;right:1665px;top:598.56px;font-size:27.4px;line-height:27.4px;color:#6d6d6d;white-space:pre;transform:scaleX(0.9410);transform-origin:100% 0;-webkit-text-stroke:0.3px #6d6d6d">21</div><div style="position:absolute;left:115.19999999999999px;top:634.39px;font-size:27.4px;line-height:27.4px;white-space:pre;transform:scaleX(0.9410);transform-origin:0 0;-webkit-text-stroke:0.3px currentColor">    <span style="color:#000">&quot;country&quot;</span><span style="color:#000">: </span><span style="color:#a11">&quot;United States&quot;</span><span style="color:#000">,</span></div><div style="position:absolute;right:1665px;top:634.39px;font-size:27.4px;line-height:27.4px;color:#6d6d6d;white-space:pre;transform:scaleX(0.9410);transform-origin:100% 0;-webkit-text-stroke:0.3px #6d6d6d">22</div><div style="position:absolute;left:115.19999999999999px;top:670.22px;font-size:27.4px;line-height:27.4px;white-space:pre;transform:scaleX(0.9410);transform-origin:0 0;-webkit-text-stroke:0.3px currentColor">    <span style="color:#000">&quot;address&quot;</span><span style="color:#000">: </span><span style="color:#a11">&quot;123 Business St, 10001 New York&quot;</span><span style="color:#000">,</span></div><div style="position:absolute;right:1665px;top:670.22px;font-size:27.4px;line-height:27.4px;color:#6d6d6d;white-space:pre;transform:scaleX(0.9410);transform-origin:100% 0;-webkit-text-stroke:0.3px #6d6d6d">23</div><div style="position:absolute;left:115.19999999999999px;top:706.05px;font-size:27.4px;line-height:27.4px;white-space:pre;transform:scaleX(0.9410);transform-origin:0 0;-webkit-text-stroke:0.3px currentColor">    <span style="color:#000">&quot;representative_name&quot;</span><span style="color:#000">: </span><span style="color:#a11">&quot;Jane Smith&quot;</span><span style="color:#000">,</span></div><div style="position:absolute;right:1665px;top:706.05px;font-size:27.4px;line-height:27.4px;color:#6d6d6d;white-space:pre;transform:scaleX(0.9410);transform-origin:100% 0;-webkit-text-stroke:0.3px #6d6d6d">24</div><div style="position:absolute;left:115.19999999999999px;top:741.88px;font-size:27.4px;line-height:27.4px;white-space:pre;transform:scaleX(0.9410);transform-origin:0 0;-webkit-text-stroke:0.3px currentColor">    <span style="color:#000">&quot;representative_title&quot;</span><span style="color:#000">: </span><span style="color:#a11">&quot;Human Resources Manager&quot;</span><span style="color:#000">,</span></div><div style="position:absolute;right:1665px;top:741.88px;font-size:27.4px;line-height:27.4px;color:#6d6d6d;white-space:pre;transform:scaleX(0.9410);transform-origin:100% 0;-webkit-text-stroke:0.3px #6d6d6d">25</div><div style="position:absolute;left:115.19999999999999px;top:777.71px;font-size:27.4px;line-height:27.4px;white-space:pre;transform:scaleX(0.9410);transform-origin:0 0;-webkit-text-stroke:0.3px currentColor">    <span style="color:#000">&quot;signature_date&quot;</span><span style="color:#000">: </span><span style="color:#000">{</span></div><div style="position:absolute;right:1665px;top:777.71px;font-size:27.4px;line-height:27.4px;color:#6d6d6d;white-space:pre;transform:scaleX(0.9410);transform-origin:100% 0;-webkit-text-stroke:0.3px #6d6d6d">26</div><svg style="position:absolute;left:48px;top:789.03px" width="16" height="16" viewBox="0 0 16 16"><path d="M2.6 4.5 L8.4 10.3 L14.2 4.5" stroke="#6d6d6d" stroke-width="1.6" fill="none"/></svg><div style="position:absolute;left:115.19999999999999px;top:813.54px;font-size:27.4px;line-height:27.4px;white-space:pre;transform:scaleX(0.9410);transform-origin:0 0;-webkit-text-stroke:0.3px currentColor">      <span style="color:#000">&quot;type&quot;</span><span style="color:#000">: </span><span style="color:#a11">&quot;date&quot;</span><span style="color:#000">,</span></div><div style="position:absolute;right:1665px;top:813.54px;font-size:27.4px;line-height:27.4px;color:#6d6d6d;white-space:pre;transform:scaleX(0.9410);transform-origin:100% 0;-webkit-text-stroke:0.3px #6d6d6d">27</div><div style="position:absolute;left:115.19999999999999px;top:849.37px;font-size:27.4px;line-height:27.4px;white-space:pre;transform:scaleX(0.9410);transform-origin:0 0;-webkit-text-stroke:0.3px currentColor">      <span style="color:#000">&quot;email&quot;</span><span style="color:#000">: </span><span style="color:#a11">&quot;jane.smith@example.com&quot;</span><span style="color:#000">,</span></div><div style="position:absolute;right:1665px;top:849.37px;font-size:27.4px;line-height:27.4px;color:#6d6d6d;white-space:pre;transform:scaleX(0.9410);transform-origin:100% 0;-webkit-text-stroke:0.3px #6d6d6d">28</div><div style="position:absolute;left:115.19999999999999px;top:885.20px;font-size:27.4px;line-height:27.4px;white-space:pre;transform:scaleX(0.9410);transform-origin:0 0;-webkit-text-stroke:0.3px currentColor">      <span style="color:#000">&quot;recipientFirstname&quot;</span><span style="color:#000">: </span><span style="color:#a11">&quot;Jane&quot;</span><span style="color:#000">,</span></div><div style="position:absolute;right:1665px;top:885.20px;font-size:27.4px;line-height:27.4px;color:#6d6d6d;white-space:pre;transform:scaleX(0.9410);transform-origin:100% 0;-webkit-text-stroke:0.3px #6d6d6d">29</div><div style="position:absolute;left:115.19999999999999px;top:921.03px;font-size:27.4px;line-height:27.4px;white-space:pre;transform:scaleX(0.9410);transform-origin:0 0;-webkit-text-stroke:0.3px currentColor">      <span style="color:#000">&quot;recipientLastname&quot;</span><span style="color:#000">: </span><span style="color:#a11">&quot;Smith&quot;</span><span style="color:#000"></span></div><div style="position:absolute;right:1665px;top:921.03px;font-size:27.4px;line-height:27.4px;color:#6d6d6d;white-space:pre;transform:scaleX(0.9410);transform-origin:100% 0;-webkit-text-stroke:0.3px #6d6d6d">30</div><div style="position:absolute;left:115.19999999999999px;top:956.86px;font-size:27.4px;line-height:27.4px;white-space:pre;transform:scaleX(0.9410);transform-origin:0 0;-webkit-text-stroke:0.3px currentColor">    <span style="color:#000">},</span></div><div style="position:absolute;right:1665px;top:956.86px;font-size:27.4px;line-height:27.4px;color:#6d6d6d;white-space:pre;transform:scaleX(0.9410);transform-origin:100% 0;-webkit-text-stroke:0.3px #6d6d6d">31</div><div style="position:absolute;left:115.19999999999999px;top:992.69px;font-size:27.4px;line-height:27.4px;white-space:pre;transform:scaleX(0.9410);transform-origin:0 0;-webkit-text-stroke:0.3px currentColor">    <span style="color:#000">&quot;signature&quot;</span><span style="color:#000">: </span><span style="color:#000">{</span></div><div style="position:absolute;right:1665px;top:992.69px;font-size:27.4px;line-height:27.4px;color:#6d6d6d;white-space:pre;transform:scaleX(0.9410);transform-origin:100% 0;-webkit-text-stroke:0.3px #6d6d6d">32</div><svg style="position:absolute;left:48px;top:1004.01px" width="16" height="16" viewBox="0 0 16 16"><path d="M2.6 4.5 L8.4 10.3 L14.2 4.5" stroke="#6d6d6d" stroke-width="1.6" fill="none"/></svg><div style="position:absolute;left:115.19999999999999px;top:1028.52px;font-size:27.4px;line-height:27.4px;white-space:pre;transform:scaleX(0.9410);transform-origin:0 0;-webkit-text-stroke:0.3px currentColor">      <span style="color:#000">&quot;type&quot;</span><span style="color:#000">: </span><span style="color:#a11">&quot;signature&quot;</span><span style="color:#000">,</span></div><div style="position:absolute;right:1665px;top:1028.52px;font-size:27.4px;line-height:27.4px;color:#6d6d6d;white-space:pre;transform:scaleX(0.9410);transform-origin:100% 0;-webkit-text-stroke:0.3px #6d6d6d">33</div><div style="position:absolute;left:115.19999999999999px;top:1064.35px;font-size:27.4px;line-height:27.4px;white-space:pre;transform:scaleX(0.9410);transform-origin:0 0;-webkit-text-stroke:0.3px currentColor">      <span style="color:#000">&quot;email&quot;</span><span style="color:#000">: </span><span style="color:#a11">&quot;jane.smith@example.com&quot;</span><span style="color:#000">,</span></div><div style="position:absolute;right:1665px;top:1064.35px;font-size:27.4px;line-height:27.4px;color:#6d6d6d;white-space:pre;transform:scaleX(0.9410);transform-origin:100% 0;-webkit-text-stroke:0.3px #6d6d6d">34</div><div style="position:absolute;left:115.19999999999999px;top:1100.18px;font-size:27.4px;line-height:27.4px;white-space:pre;transform:scaleX(0.9410);transform-origin:0 0;-webkit-text-stroke:0.3px currentColor">      <span style="color:#000">&quot;recipientFirstname&quot;</span><span style="color:#000">: </span><span style="color:#a11">&quot;Jane&quot;</span><span style="color:#000">,</span></div><div style="position:absolute;right:1665px;top:1100.18px;font-size:27.4px;line-height:27.4px;color:#6d6d6d;white-space:pre;transform:scaleX(0.9410);transform-origin:100% 0;-webkit-text-stroke:0.3px #6d6d6d">35</div><div style="position:absolute;left:115.19999999999999px;top:1136.01px;font-size:27.4px;line-height:27.4px;white-space:pre;transform:scaleX(0.9410);transform-origin:0 0;-webkit-text-stroke:0.3px currentColor">      <span style="color:#000">&quot;recipientLastname&quot;</span><span style="color:#000">: </span><span style="color:#a11">&quot;Smith&quot;</span><span style="color:#000"></span></div><div style="position:absolute;right:1665px;top:1136.01px;font-size:27.4px;line-height:27.4px;color:#6d6d6d;white-space:pre;transform:scaleX(0.9410);transform-origin:100% 0;-webkit-text-stroke:0.3px #6d6d6d">36</div><div style="position:absolute;left:115.19999999999999px;top:1171.84px;font-size:27.4px;line-height:27.4px;white-space:pre;transform:scaleX(0.9410);transform-origin:0 0;-webkit-text-stroke:0.3px currentColor">    <span style="color:#000">}</span></div><div style="position:absolute;right:1665px;top:1171.84px;font-size:27.4px;line-height:27.4px;color:#6d6d6d;white-space:pre;transform:scaleX(0.9410);transform-origin:100% 0;-webkit-text-stroke:0.3px #6d6d6d">37</div><div style="position:absolute;left:115.19999999999999px;top:1207.67px;font-size:27.4px;line-height:27.4px;white-space:pre;transform:scaleX(0.9410);transform-origin:0 0;-webkit-text-stroke:0.3px currentColor">  <span style="color:#000">},</span></div><div style="position:absolute;right:1665px;top:1207.67px;font-size:27.4px;line-height:27.4px;color:#6d6d6d;white-space:pre;transform:scaleX(0.9410);transform-origin:100% 0;-webkit-text-stroke:0.3px #6d6d6d">38</div><div style="position:absolute;left:115.19999999999999px;top:1243.50px;font-size:27.4px;line-height:27.4px;white-space:pre;transform:scaleX(0.9410);transform-origin:0 0;-webkit-text-stroke:0.3px currentColor">  <span style="color:#000">&quot;employee&quot;</span><span style="color:#000">: </span><span style="color:#000">{</span></div><div style="position:absolute;right:1665px;top:1243.50px;font-size:27.4px;line-height:27.4px;color:#6d6d6d;white-space:pre;transform:scaleX(0.9410);transform-origin:100% 0;-webkit-text-stroke:0.3px #6d6d6d">39</div><svg style="position:absolute;left:48px;top:1254.82px" width="16" height="16" viewBox="0 0 16 16"><path d="M2.6 4.5 L8.4 10.3 L14.2 4.5" stroke="#6d6d6d" stroke-width="1.6" fill="none"/></svg><div style="position:absolute;left:115.19999999999999px;top:1279.33px;font-size:27.4px;line-height:27.4px;white-space:pre;transform:scaleX(0.9410);transform-origin:0 0;-webkit-text-stroke:0.3px currentColor">    <span style="color:#000">&quot;name&quot;</span><span style="color:#000">: </span><span style="color:#a11">&quot;John Doe&quot;</span><span style="color:#000">,</span></div><div style="position:absolute;right:1665px;top:1279.33px;font-size:27.4px;line-height:27.4px;color:#4a4a4a;white-space:pre;transform:scaleX(0.9410);transform-origin:100% 0;-webkit-text-stroke:0.3px #4a4a4a">40</div><div style="position:absolute;left:115.19999999999999px;top:1315.16px;font-size:27.4px;line-height:27.4px;white-space:pre;transform:scaleX(0.9410);transform-origin:0 0;-webkit-text-stroke:0.3px currentColor">    <span style="color:#000">&quot;address&quot;</span><span style="color:#000">: </span><span style="color:#a11">&quot;456 Main St, 20001 Washington&quot;</span><span style="color:#000">,</span></div><div style="position:absolute;right:1665px;top:1315.16px;font-size:27.4px;line-height:27.4px;color:#6d6d6d;white-space:pre;transform:scaleX(0.9410);transform-origin:100% 0;-webkit-text-stroke:0.3px #6d6d6d">41</div><div style="position:absolute;left:115.19999999999999px;top:1350.99px;font-size:27.4px;line-height:27.4px;white-space:pre;transform:scaleX(0.9410);transform-origin:0 0;-webkit-text-stroke:0.3px currentColor">    <span style="color:#000">&quot;signature_date&quot;</span><span style="color:#000">: </span><span style="color:#000">{</span></div><div style="position:absolute;right:1665px;top:1350.99px;font-size:27.4px;line-height:27.4px;color:#6d6d6d;white-space:pre;transform:scaleX(0.9410);transform-origin:100% 0;-webkit-text-stroke:0.3px #6d6d6d">42</div><svg style="position:absolute;left:48px;top:1362.31px" width="16" height="16" viewBox="0 0 16 16"><path d="M2.6 4.5 L8.4 10.3 L14.2 4.5" stroke="#6d6d6d" stroke-width="1.6" fill="none"/></svg><div style="position:absolute;left:115.19999999999999px;top:1386.82px;font-size:27.4px;line-height:27.4px;white-space:pre;transform:scaleX(0.9410);transform-origin:0 0;-webkit-text-stroke:0.3px currentColor">      <span style="color:#000">&quot;type&quot;</span><span style="color:#000">: </span><span style="color:#a11">&quot;date&quot;</span><span style="color:#000">,</span></div><div style="position:absolute;right:1665px;top:1386.82px;font-size:27.4px;line-height:27.4px;color:#6d6d6d;white-space:pre;transform:scaleX(0.9410);transform-origin:100% 0;-webkit-text-stroke:0.3px #6d6d6d">43</div><div style="position:absolute;left:115.19999999999999px;top:1422.65px;font-size:27.4px;line-height:27.4px;white-space:pre;transform:scaleX(0.9410);transform-origin:0 0;-webkit-text-stroke:0.3px currentColor">      <span style="color:#000">&quot;email&quot;</span><span style="color:#000">: </span><span style="color:#a11">&quot;john.doe@example.com&quot;</span><span style="color:#000">,</span></div><div style="position:absolute;right:1665px;top:1422.65px;font-size:27.4px;line-height:27.4px;color:#6d6d6d;white-space:pre;transform:scaleX(0.9410);transform-origin:100% 0;-webkit-text-stroke:0.3px #6d6d6d">44</div><div style="position:absolute;left:115.19999999999999px;top:1458.48px;font-size:27.4px;line-height:27.4px;white-space:pre;transform:scaleX(0.9410);transform-origin:0 0;-webkit-text-stroke:0.3px currentColor">      <span style="color:#000">&quot;recipientFirstname&quot;</span><span style="color:#000">: </span><span style="color:#a11">&quot;John&quot;</span><span style="color:#000">,</span></div><div style="position:absolute;right:1665px;top:1458.48px;font-size:27.4px;line-height:27.4px;color:#6d6d6d;white-space:pre;transform:scaleX(0.9410);transform-origin:100% 0;-webkit-text-stroke:0.3px #6d6d6d">45</div><div style="position:absolute;left:115.19999999999999px;top:1494.31px;font-size:27.4px;line-height:27.4px;white-space:pre;transform:scaleX(0.9410);transform-origin:0 0;-webkit-text-stroke:0.3px currentColor">      <span style="color:#000">&quot;recipientLastname&quot;</span><span style="color:#000">: </span><span style="color:#a11">&quot;Doe&quot;</span><span style="color:#000"></span></div><div style="position:absolute;right:1665px;top:1494.31px;font-size:27.4px;line-height:27.4px;color:#6d6d6d;white-space:pre;transform:scaleX(0.9410);transform-origin:100% 0;-webkit-text-stroke:0.3px #6d6d6d">46</div><div style="position:absolute;left:115.19999999999999px;top:1530.14px;font-size:27.4px;line-height:27.4px;white-space:pre;transform:scaleX(0.9410);transform-origin:0 0;-webkit-text-stroke:0.3px currentColor">    <span style="color:#000">},</span></div><div style="position:absolute;right:1665px;top:1530.14px;font-size:27.4px;line-height:27.4px;color:#6d6d6d;white-space:pre;transform:scaleX(0.9410);transform-origin:100% 0;-webkit-text-stroke:0.3px #6d6d6d">47</div><div style="position:absolute;left:115.19999999999999px;top:1565.97px;font-size:27.4px;line-height:27.4px;white-space:pre;transform:scaleX(0.9410);transform-origin:0 0;-webkit-text-stroke:0.3px currentColor">    <span style="color:#000">&quot;signature&quot;</span><span style="color:#000">: </span><span style="color:#000">{</span></div><div style="position:absolute;right:1665px;top:1565.97px;font-size:27.4px;line-height:27.4px;color:#6d6d6d;white-space:pre;transform:scaleX(0.9410);transform-origin:100% 0;-webkit-text-stroke:0.3px #6d6d6d">48</div><svg style="position:absolute;left:48px;top:1577.29px" width="16" height="16" viewBox="0 0 16 16"><path d="M2.6 4.5 L8.4 10.3 L14.2 4.5" stroke="#6d6d6d" stroke-width="1.6" fill="none"/></svg><div style="position:absolute;left:115.19999999999999px;top:1601.80px;font-size:27.4px;line-height:27.4px;white-space:pre;transform:scaleX(0.9410);transform-origin:0 0;-webkit-text-stroke:0.3px currentColor">      <span style="color:#000">&quot;type&quot;</span><span style="color:#000">: </span><span style="color:#a11">&quot;signature&quot;</span><span style="color:#000">,</span></div><div style="position:absolute;right:1665px;top:1601.80px;font-size:27.4px;line-height:27.4px;color:#6d6d6d;white-space:pre;transform:scaleX(0.9410);transform-origin:100% 0;-webkit-text-stroke:0.3px #6d6d6d">49</div><div style="position:absolute;left:115.19999999999999px;top:1637.63px;font-size:27.4px;line-height:27.4px;white-space:pre;transform:scaleX(0.9410);transform-origin:0 0;-webkit-text-stroke:0.3px currentColor">      <span style="color:#000">&quot;email&quot;</span><span style="color:#000">: </span><span style="color:#a11">&quot;john.doe@example.com&quot;</span><span style="color:#000">,</span></div><div style="position:absolute;right:1665px;top:1637.63px;font-size:27.4px;line-height:27.4px;color:#6d6d6d;white-space:pre;transform:scaleX(0.9410);transform-origin:100% 0;-webkit-text-stroke:0.3px #6d6d6d">50</div><div style="position:absolute;left:115.19999999999999px;top:1673.46px;font-size:27.4px;line-height:27.4px;white-space:pre;transform:scaleX(0.9410);transform-origin:0 0;-webkit-text-stroke:0.3px currentColor">      <span style="color:#000">&quot;recipientFirstname&quot;</span><span style="color:#000">: </span><span style="color:#a11">&quot;John&quot;</span><span style="color:#000">,</span></div><div style="position:absolute;right:1665px;top:1673.46px;font-size:27.4px;line-height:27.4px;color:#6d6d6d;white-space:pre;transform:scaleX(0.9410);transform-origin:100% 0;-webkit-text-stroke:0.3px #6d6d6d">51</div><div style="position:absolute;left:115.19999999999999px;top:1709.29px;font-size:27.4px;line-height:27.4px;white-space:pre;transform:scaleX(0.9410);transform-origin:0 0;-webkit-text-stroke:0.3px currentColor">      <span style="color:#000">&quot;recipientLastname&quot;</span><span style="color:#000">: </span><span style="color:#a11">&quot;Doe&quot;</span><span style="color:#000"></span></div><div style="position:absolute;right:1665px;top:1709.29px;font-size:27.4px;line-height:27.4px;color:#6d6d6d;white-space:pre;transform:scaleX(0.9410);transform-origin:100% 0;-webkit-text-stroke:0.3px #6d6d6d">52</div><div style="position:absolute;left:115.19999999999999px;top:1745.12px;font-size:27.4px;line-height:27.4px;white-space:pre;transform:scaleX(0.9410);transform-origin:0 0;-webkit-text-stroke:0.3px currentColor">    <span style="color:#000">}</span></div><div style="position:absolute;right:1665px;top:1745.12px;font-size:27.4px;line-height:27.4px;color:#6d6d6d;white-space:pre;transform:scaleX(0.9410);transform-origin:100% 0;-webkit-text-stroke:0.3px #6d6d6d">53</div><div style="position:absolute;left:115.19999999999999px;top:1780.95px;font-size:27.4px;line-height:27.4px;white-space:pre;transform:scaleX(0.9410);transform-origin:0 0;-webkit-text-stroke:0.3px currentColor">  <span style="color:#000">}</span></div><div style="position:absolute;right:1665px;top:1780.95px;font-size:27.4px;line-height:27.4px;color:#6d6d6d;white-space:pre;transform:scaleX(0.9410);transform-origin:100% 0;-webkit-text-stroke:0.3px #6d6d6d">54</div><div style="position:absolute;left:115.19999999999999px;top:1816.78px;font-size:27.4px;line-height:27.4px;white-space:pre;transform:scaleX(0.9410);transform-origin:0 0;-webkit-text-stroke:0.3px currentColor"><span style="color:#000">}</span></div><div style="position:absolute;right:1665px;top:1816.78px;font-size:27.4px;line-height:27.4px;color:#6d6d6d;white-space:pre;transform:scaleX(0.9410);transform-origin:100% 0;-webkit-text-stroke:0.3px #6d6d6d">55</div></div>
<div  style="position:absolute;left:1874.00px;top:302.00px;width:229.00px;height:96.00px;background:#fff;border-radius:20px 20px 0 0;border-top:4px solid #c9b4cb;box-sizing:border-box;"></div>
<span id="t15" class="t" style="left:1926.50px;top:335.80px;font-size:32px;line-height:32px;font-family:'Liberation Sans',sans-serif;color:#9b9b9b;font-weight:400;transform:scaleX(0.9558);transform-origin:left top;">Template</span>
<div  style="position:absolute;left:2723.00px;top:319.00px;width:263.00px;height:63.00px;border:2px solid #9d9d9d;border-radius:32px;box-sizing:border-box;"></div>
<div  style="position:absolute;left:2903.50px;top:320.00px;width:2.00px;height:61.00px;background:#a8a8a8;"></div>
<svg style="position:absolute;left:2754.00px;top:328.00px;" width="52" height="42" viewBox="2822 380 52 42"><path d="M2838 416 L2834 416 Q2826 416 2826 407 Q2826 399 2834 398 Q2836 386 2848 386 Q2860 386 2862 397 Q2870 398 2870 407 Q2870 416 2861 416 L2857 416" stroke="#5f5360" stroke-width="4" fill="none" stroke-linecap="round"/><path d="M2848 396 L2848 414 M2841 408 L2848 415 L2855 408" stroke="#5f5360" stroke-width="4" fill="none" stroke-linecap="round" stroke-linejoin="round"/></svg>
<span id="t16" class="t" style="left:2821.00px;top:336.35px;font-size:29px;line-height:29px;font-family:'Liberation Sans',sans-serif;color:#5f5360;font-weight:400;transform:scaleX(0.9803);transform-origin:left top;-webkit-text-stroke:0.7px #5f5360;">Edit</span>
<svg style="position:absolute;left:2932.00px;top:342.00px;" width="26" height="18" viewBox="3000 394 26 18"><path d="M3004.5 397.5 L3021.5 397.5 L3013 407.5 Z" fill="#5f5360"/></svg>
<div  style="position:absolute;left:3004.00px;top:319.00px;width:271.00px;height:63.00px;border:2px solid #9d9d9d;border-radius:32px;box-sizing:border-box;"></div>
<div  style="position:absolute;left:3191.00px;top:320.00px;width:2.00px;height:61.00px;background:#a8a8a8;"></div>
<svg style="position:absolute;left:3040.00px;top:326.00px;" width="42" height="48" viewBox="3108 378 42 48"><path d="M3131 384 L3115 384 Q3113 384 3113 386 L3113 418 Q3113 420 3115 420 L3142 420 Q3144 420 3144 418 L3144 397 Z" stroke="#5f5360" stroke-width="4" fill="none" stroke-linejoin="round"/><path d="M3131 384 L3131 397 L3144 397 Z" fill="#5f5360"/><path d="M3128.5 416 L3128.5 402 M3122.5 408 L3128.5 402 L3134.5 408" stroke="#5f5360" stroke-width="3.6" fill="none" stroke-linejoin="round"/></svg>
<span id="t17" class="t" style="left:3102.00px;top:336.35px;font-size:29px;line-height:29px;font-family:'Liberation Sans',sans-serif;color:#5f5360;font-weight:400;transform:scaleX(0.9773);transform-origin:left top;-webkit-text-stroke:0.7px #5f5360;">New</span>
<svg style="position:absolute;left:3220.00px;top:342.00px;" width="26" height="18" viewBox="3288 394 26 18"><path d="M3292 397.5 L3310 397.5 L3301 407.5 Z" fill="#5f5360"/></svg>
<div  style="position:absolute;left:3291.00px;top:319.00px;width:272.00px;height:63.00px;border:2px solid #d0d0d0;border-radius:32px;box-sizing:border-box;"></div>
<svg style="position:absolute;left:3330.00px;top:336.00px;" width="38" height="30" viewBox="3398 388 38 30"><path d="M3403 403 L3413 412 L3430 394" stroke="#9a9a9a" stroke-width="4.2" fill="none" stroke-linecap="round" stroke-linejoin="round"/></svg>
<span id="t18" class="t" style="left:3390.50px;top:336.35px;font-size:29px;line-height:29px;font-family:'Liberation Sans',sans-serif;color:#9a9a9a;font-weight:400;transform:scaleX(1.0038);transform-origin:left top;-webkit-text-stroke:0.5px #9a9a9a;">Deployed</span>
<div  style="position:absolute;left:1874.00px;top:398.00px;width:1706.00px;height:105.00px;background:#fff;"></div>
<span id="t19" class="t" style="left:2646.60px;top:431.86px;font-size:23.7px;line-height:23.7px;font-family:'Liberation Sans',sans-serif;color:#9a9a9a;font-weight:400;transform:scaleX(1.0069);transform-origin:left top;">Version History</span>
<div  style="position:absolute;left:1926.00px;top:490.00px;width:1600.00px;height:12.00px;background:#e3e3e3;border-radius:14px 14px 0 0;"></div>
<div  style="position:absolute;left:1874.00px;top:495.00px;width:1706.00px;height:8.00px;background:#f2f2f4;"></div>
<div  style="position:absolute;left:1874.00px;top:503.00px;width:1706.00px;height:98.00px;background:#525558;"></div>
<div  style="position:absolute;left:1874.00px;top:504.00px;width:264.00px;height:97.00px;background:#313437;border-radius:22px 22px 0 0;border-top:4px solid #979899;box-sizing:border-box;"></div>
<span id="t20" class="t" style="left:1926.00px;top:538.35px;font-size:31px;line-height:31px;font-family:'Liberation Sans',sans-serif;color:#a9a9a9;font-weight:400;transform:scaleX(0.9613);transform-origin:left top;">Preview</span>
<span id="t21" class="t" style="left:2041.00px;top:543.71px;font-size:24.7px;line-height:24.7px;font-family:'Liberation Sans',sans-serif;color:#a9a9a9;font-weight:400;transform:scaleX(0.9316);transform-origin:left top;">PDF</span>
<div  style="position:absolute;left:2476.00px;top:528.00px;width:71.00px;height:47.00px;background:#2f3235;border-radius:9px;"></div>
<span id="t22" class="t" style="right:1040.00px;top:536.98px;font-size:30.5px;line-height:30.5px;font-family:'Liberation Sans',sans-serif;color:#f2f2f2;font-weight:400;">1</span>
<span id="t23" class="t" style="left:2562.00px;top:536.98px;font-size:30.5px;line-height:30.5px;font-family:'Liberation Sans',sans-serif;color:#ececec;font-weight:400;">/</span>
<span id="t24" class="t" style="left:2588.00px;top:536.98px;font-size:30.5px;line-height:30.5px;font-family:'Liberation Sans',sans-serif;color:#ececec;font-weight:400;">2</span>
<svg style="position:absolute;left:2654.00px;top:530.00px;" width="44" height="42" viewBox="2722 582 44 42"><circle cx="2740" cy="599" r="11.6" stroke="#f0f0f0" stroke-width="3.6" fill="none"/><path d="M2734 599 L2746 599" stroke="#f0f0f0" stroke-width="3.4"/><path d="M2749 608 L2760 619" stroke="#f0f0f0" stroke-width="3.8" stroke-linecap="round"/></svg>
<svg style="position:absolute;left:2750.00px;top:530.00px;" width="44" height="42" viewBox="2818 582 44 42"><circle cx="2836" cy="599" r="11.6" stroke="#f0f0f0" stroke-width="3.6" fill="none"/><path d="M2830 599 L2842 599 M2836 593 L2836 605" stroke="#f0f0f0" stroke-width="3.4"/><path d="M2845 608 L2856 619" stroke="#f0f0f0" stroke-width="3.8" stroke-linecap="round"/></svg>
<div  style="position:absolute;left:3087.00px;top:524.00px;width:93.00px;height:57.00px;border:3px solid #9b9b9b;border-radius:29px;box-sizing:border-box;background:#4c4f52;"></div>
<svg style="position:absolute;left:3100.00px;top:537.00px;" width="30" height="30" viewBox="3168 589 30 30"><circle cx="3183.2" cy="603.8" r="13.4" fill="#a9a9a9"/></svg>
<svg style="position:absolute;left:3216.00px;top:532.00px;" width="42" height="40" viewBox="3284 584 42 40"><path d="M3304.3 588 L3304.3 609 M3295 600.5 L3304.3 609.5 L3313.6 600.5" stroke="#f0f0f0" stroke-width="3.8" fill="none" stroke-linecap="round" stroke-linejoin="round"/><path d="M3290 609 L3290 617 Q3290 619 3292 619 L3317 619 Q3319 619 3319 617 L3319 609" stroke="#f0f0f0" stroke-width="3.8" fill="none" stroke-linecap="round"/></svg>
<span id="t25" class="t" style="left:3313.00px;top:534.97px;font-size:34.5px;line-height:34.5px;font-family:'Liberation Sans',sans-serif;color:#e9e9e9;font-weight:400;transform:scaleX(0.8767);transform-origin:left top;">V5</span>
<svg style="position:absolute;left:3402.00px;top:528.00px;" width="54" height="48" viewBox="3470 580 54 48"><circle cx="3495.7" cy="603.5" r="17.2" stroke="#f0f0f0" stroke-width="3.2" fill="none"/><ellipse cx="3495.7" cy="603.5" rx="7.5" ry="17.2" stroke="#f0f0f0" stroke-width="3" fill="none"/><path d="M3478.5 599 L3513 599 M3479 611.5 L3512 611.5" stroke="#f0f0f0" stroke-width="2.8"/><rect x="3494.5" y="606" width="26" height="20" fill="#525558"/></svg>
<span id="t26" class="t" style="left:3427.80px;top:556.32px;font-size:13.5px;line-height:13.5px;font-family:'Liberation Sans',sans-serif;color:#f0f0f0;font-weight:400;transform:scaleX(0.8040);transform-origin:left top;letter-spacing:1.5px;-webkit-text-stroke:0.3px #f0f0f0;">EN</span>
<svg style="position:absolute;left:3496.00px;top:528.00px;" width="56" height="48" viewBox="3564 580 56 48"><path d="M3571.5 603.5 Q3590 578 3611 601" stroke="#f0f0f0" stroke-width="3.6" fill="none" stroke-linecap="butt"/><path d="M3571.5 603.5 Q3578 615 3589 617.5" stroke="#f0f0f0" stroke-width="3.6" fill="none"/><path d="M3598.4 601.2 A8.6 8.6 0 1 0 3587.9 614.4" stroke="#f0f0f0" stroke-width="3.4" fill="none"/><circle cx="3603.3" cy="614.9" r="11.5" fill="#525558"/><path d="M3609.44 613.08 L3611.79 613.55 L3611.79 616.25 L3609.44 616.72 L3607.94 619.31 L3608.71 621.58 L3606.38 622.93 L3604.79 621.12 L3601.81 621.12 L3600.22 622.93 L3597.89 621.58 L3598.66 619.31 L3597.16 616.72 L3594.81 616.25 L3594.81 613.55 L3597.16 613.08 L3598.66 610.49 L3597.89 608.22 L3600.22 606.87 L3601.81 608.68 L3604.79 608.68 L3606.38 606.87 L3608.71 608.22 L3607.94 610.49 Z" fill="#f0f0f0"/><circle cx="3603.3" cy="614.9" r="3.3" fill="#525558"/></svg>
<div  style="position:absolute;left:1874.00px;top:601.00px;width:1706.00px;height:1655.00px;background:#323437;"></div>
<div  style="position:absolute;left:1914.00px;top:620.50px;width:1626.00px;height:1636.00px;background:#fff;"></div>
<span id="t27" class="t" style="left:2106.30px;top:820.31px;font-size:40.1px;line-height:40.1px;font-family:'Liberation Sans',sans-serif;color:#0d0d0d;font-weight:700;transform:scaleX(0.9201);transform-origin:left top;-webkit-text-stroke:0.35px #0d0d0d;">EMPLOYMENT AGREEMENT</span>
<span id="t28" class="t" style="left:2106.30px;top:904.89px;font-size:25.3px;line-height:25.3px;font-family:'Liberation Sans',sans-serif;color:#0d0d0d;font-weight:400;transform:scaleX(1.0092);transform-origin:left top;-webkit-text-stroke:0.35px #0d0d0d;">This Employment Agreement (<b>“Agreement”</b>) is made and entered into as of start_date5, by and between:</span>
<span id="t29" class="t" style="left:2202.40px;top:963.29px;font-size:25.3px;line-height:25.3px;font-family:'Liberation Sans',sans-serif;color:#0d0d0d;font-weight:400;transform:scaleX(1.0087);transform-origin:left top;-webkit-text-stroke:0.35px #0d0d0d;"><b>Employer</b>: Acme Corporation, a company registered under the laws of United States, with its</span>
<span id="t30" class="t" style="left:2133.40px;top:997.09px;font-size:25.3px;line-height:25.3px;font-family:'Liberation Sans',sans-serif;color:#0d0d0d;font-weight:400;transform:scaleX(0.9809);transform-origin:left top;-webkit-text-stroke:0.35px #0d0d0d;">principal place of business at 123 Business St, 10001 New York (<b>“Employer”</b>).</span>
<span id="t31" class="t" style="left:2202.40px;top:1054.79px;font-size:25.3px;line-height:25.3px;font-family:'Liberation Sans',sans-serif;color:#0d0d0d;font-weight:400;transform:scaleX(0.9838);transform-origin:left top;-webkit-text-stroke:0.35px #0d0d0d;"><b>Employee</b>: John Doe, residing at 456 Main St, 20001 Washington (<b>“Employee”</b>).</span>
<span id="t32" class="t" style="left:2106.30px;top:1123.11px;font-size:33.4px;line-height:33.4px;font-family:'Liberation Sans',sans-serif;color:#0d0d0d;font-weight:700;transform:scaleX(0.8742);transform-origin:left top;-webkit-text-stroke:0.35px #0d0d0d;">1. POSITION &amp; DUTIES</span>
<span id="t33" class="t" style="left:2106.30px;top:1200.49px;font-size:25.3px;line-height:25.3px;font-family:'Liberation Sans',sans-serif;color:#0d0d0d;font-weight:400;transform:scaleX(1.0021);transform-origin:left top;-webkit-text-stroke:0.35px #0d0d0d;">The Employer agrees to hire the Employee, and the Employee agrees to serve as Marketing director. The</span>
<span id="t34" class="t" style="left:2106.30px;top:1234.29px;font-size:25.3px;line-height:25.3px;font-family:'Liberation Sans',sans-serif;color:#0d0d0d;font-weight:400;transform:scaleX(1.0080);transform-origin:left top;-webkit-text-stroke:0.35px #0d0d0d;">Employee shall perform the duties and responsibilities assigned by the Employer, which may be reasonably</span>
<span id="t35" class="t" style="left:2106.30px;top:1268.49px;font-size:25.3px;line-height:25.3px;font-family:'Liberation Sans',sans-serif;color:#0d0d0d;font-weight:400;transform:scaleX(1.0526);transform-origin:left top;-webkit-text-stroke:0.35px #0d0d0d;">modified from time to time.</span>
<span id="t36" class="t" style="left:2106.30px;top:1333.61px;font-size:33.4px;line-height:33.4px;font-family:'Liberation Sans',sans-serif;color:#0d0d0d;font-weight:700;transform:scaleX(0.8775);transform-origin:left top;-webkit-text-stroke:0.35px #0d0d0d;">2. TERM OF EMPLOYMENT</span>
<span id="t37" class="t" style="left:2106.30px;top:1411.49px;font-size:25.3px;line-height:25.3px;font-family:'Liberation Sans',sans-serif;color:#0d0d0d;font-weight:400;transform:scaleX(1.0134);transform-origin:left top;-webkit-text-stroke:0.35px #0d0d0d;">The Employee’s employment shall commence on 12/02/2025 and shall continue:</span>
<span id="t38" class="t" style="left:2136.30px;top:1449.49px;font-size:25.3px;line-height:25.3px;font-family:'Liberation Sans',sans-serif;color:#0d0d0d;font-weight:400;transform:scaleX(1.0483);transform-origin:left top;-webkit-text-stroke:0.35px #0d0d0d;">Indefinitely (At-will employment).</span>
<span id="t39" class="t" style="left:2136.30px;top:1485.49px;font-size:25.3px;line-height:25.3px;font-family:'Liberation Sans',sans-serif;color:#0d0d0d;font-weight:400;transform:scaleX(1.0199);transform-origin:left top;-webkit-text-stroke:0.35px #0d0d0d;">For a fixed term until N/A, unless terminated earlier as per this Agreement.</span>
<span id="t40" class="t" style="left:2106.30px;top:1553.91px;font-size:33.4px;line-height:33.4px;font-family:'Liberation Sans',sans-serif;color:#0d0d0d;font-weight:700;transform:scaleX(0.8840);transform-origin:left top;-webkit-text-stroke:0.35px #0d0d0d;">3. COMPENSATION</span>
<span id="t41" class="t" style="left:2106.30px;top:1630.39px;font-size:25.3px;line-height:25.3px;font-family:'Liberation Sans',sans-serif;color:#0d0d0d;font-weight:400;transform:scaleX(0.9997);transform-origin:left top;-webkit-text-stroke:0.35px #0d0d0d;">The Employer shall pay the Employee a salary of 54000 € per year, payable in accordance with the Employer’s</span>
<span id="t42" class="t" style="left:2106.30px;top:1663.99px;font-size:25.3px;line-height:25.3px;font-family:'Liberation Sans',sans-serif;color:#0d0d0d;font-weight:400;transform:scaleX(1.0067);transform-origin:left top;-webkit-text-stroke:0.35px #0d0d0d;">standard payroll schedule.</span>
<span id="t43" class="t" style="left:2106.30px;top:1731.61px;font-size:33.4px;line-height:33.4px;font-family:'Liberation Sans',sans-serif;color:#0d0d0d;font-weight:700;transform:scaleX(0.8754);transform-origin:left top;-webkit-text-stroke:0.35px #0d0d0d;">4. WORKING HOURS</span>
<span id="t44" class="t" style="left:2106.30px;top:1807.99px;font-size:25.3px;line-height:25.3px;font-family:'Liberation Sans',sans-serif;color:#0d0d0d;font-weight:400;transform:scaleX(1.0167);transform-origin:left top;-webkit-text-stroke:0.35px #0d0d0d;">The Employee shall work 39 hours per week, with standard working hours from 9am to 6pm, subject to</span>
<span id="t45" class="t" style="left:2106.30px;top:1841.49px;font-size:25.3px;line-height:25.3px;font-family:'Liberation Sans',sans-serif;color:#0d0d0d;font-weight:400;transform:scaleX(0.9978);transform-origin:left top;-webkit-text-stroke:0.35px #0d0d0d;">necessary adjustments based on work demands.</span>
<span id="t46" class="t" style="left:2106.30px;top:1909.61px;font-size:33.4px;line-height:33.4px;font-family:'Liberation Sans',sans-serif;color:#0d0d0d;font-weight:700;transform:scaleX(0.8242);transform-origin:left top;-webkit-text-stroke:0.35px #0d0d0d;">5. BENEFITS</span>
<span id="t47" class="t" style="left:2106.30px;top:1987.09px;font-size:25.3px;line-height:25.3px;font-family:'Liberation Sans',sans-serif;color:#0d0d0d;font-weight:400;transform:scaleX(1.0186);transform-origin:left top;-webkit-text-stroke:0.35px #0d0d0d;">The Employee shall be entitled to the benefits offered by the Employer, which may include:</span>
<span id="t48" class="t" style="left:2136.30px;top:2023.99px;font-size:25.3px;line-height:25.3px;font-family:'Liberation Sans',sans-serif;color:#0d0d0d;font-weight:400;transform:scaleX(1.0019);transform-origin:left top;-webkit-text-stroke:0.35px #0d0d0d;">Health insurance</span>
<span id="t49" class="t" style="left:2136.30px;top:2060.49px;font-size:25.3px;line-height:25.3px;font-family:'Liberation Sans',sans-serif;color:#0d0d0d;font-weight:400;transform:scaleX(0.9999);transform-origin:left top;-webkit-text-stroke:0.35px #0d0d0d;">Paid time off ( days per year)</span>
<span id="t50" class="t" style="left:2136.30px;top:2097.89px;font-size:25.3px;line-height:25.3px;font-family:'Liberation Sans',sans-serif;color:#0d0d0d;font-weight:400;transform:scaleX(1.0175);transform-origin:left top;-webkit-text-stroke:0.35px #0d0d0d;">Retirement plan</span>
<span id="t51" class="t" style="left:2136.30px;top:2134.30px;font-size:25.3px;line-height:25.3px;font-family:'Liberation Sans',sans-serif;color:#0d0d0d;font-weight:400;transform:scaleX(1.0285);transform-origin:left top;-webkit-text-stroke:0.35px #0d0d0d;">Other:</span>
<span id="t52" class="t" style="left:2106.30px;top:2201.61px;font-size:33.4px;line-height:33.4px;font-family:'Liberation Sans',sans-serif;color:#0d0d0d;font-weight:700;transform:scaleX(0.8806);transform-origin:left top;-webkit-text-stroke:0.35px #0d0d0d;">6. CONFIDENTIALITY &amp; NON-COMPETITION</span>
<svg style="position:absolute;left:2131.00px;top:970.80px;" width="16" height="16" viewBox="2199 1022.8 16 16"><circle cx="2206.4" cy="1028.6" r="5" fill="#0d0d0d"/></svg>
<svg style="position:absolute;left:2131.00px;top:1062.30px;" width="16" height="16" viewBox="2199 1114.3 16 16"><circle cx="2206.4" cy="1120.1" r="5" fill="#0d0d0d"/></svg>
<svg style="position:absolute;left:2104.00px;top:1448.90px;" width="28" height="26" viewBox="2172 1500.9 28 26"><rect x="2176.5" y="1503.9" width="18.5" height="18.5" stroke="#0d0d0d" stroke-width="2" fill="none"/></svg>
<svg style="position:absolute;left:2104.00px;top:1484.90px;" width="28" height="26" viewBox="2172 1536.9 28 26"><rect x="2176.5" y="1539.9" width="18.5" height="18.5" stroke="#0d0d0d" stroke-width="2" fill="none"/><path d="M2180 1548.9 L2184.5 1554.9 L2192 1540.9" stroke="#0d0d0d" stroke-width="2.6" fill="none"/></svg>
<svg style="position:absolute;left:2104.00px;top:2023.40px;" width="28" height="26" viewBox="2172 2075.4 28 26"><rect x="2176.5" y="2078.4" width="18.5" height="18.5" stroke="#0d0d0d" stroke-width="2" fill="none"/><path d="M2180 2087.4 L2184.5 2093.4 L2192 2079.4" stroke="#0d0d0d" stroke-width="2.6" fill="none"/></svg>
<svg style="position:absolute;left:2104.00px;top:2059.90px;" width="28" height="26" viewBox="2172 2111.9 28 26"><rect x="2176.5" y="2114.9" width="18.5" height="18.5" stroke="#0d0d0d" stroke-width="2" fill="none"/></svg>
<svg style="position:absolute;left:2104.00px;top:2097.30px;" width="28" height="26" viewBox="2172 2149.3 28 26"><rect x="2176.5" y="2152.3" width="18.5" height="18.5" stroke="#0d0d0d" stroke-width="2" fill="none"/><path d="M2180 2161.3 L2184.5 2167.3 L2192 2153.3" stroke="#0d0d0d" stroke-width="2.6" fill="none"/></svg>
<svg style="position:absolute;left:2104.00px;top:2133.70px;" width="28" height="26" viewBox="2172 2185.7000000000003 28 26"><rect x="2176.5" y="2188.7" width="18.5" height="18.5" stroke="#0d0d0d" stroke-width="2" fill="none"/></svg>
<div id="wm" style="position:absolute;left:2410.4px;top:1696.3px;font-family:'Liberation Sans',sans-serif;font-size:350px;line-height:350px;color:rgba(207,207,207,0.41);transform:rotate(-45deg) scaleX(0.925);transform-origin:0 297.5px;white-space:pre">Carbone</div>
<div  style="position:absolute;left:3412.00px;top:2096.00px;width:120.00px;height:120.00px;background:#6a2bd8;border-radius:50%;box-shadow:0 4px 14px rgba(0,0,0,0.12);"></div>
<svg style="position:absolute;left:3437.00px;top:2128.00px;" width="70" height="60" viewBox="3505 2180 70 60"><path d="M3510.8 2191.3 L3565 2185.9 L3567.7 2219.7 L3550 2222.3 L3542.4 2233.8 L3532.7 2224 L3514 2226 Z" fill="#fff"/></svg>
</div>
</body></html>
